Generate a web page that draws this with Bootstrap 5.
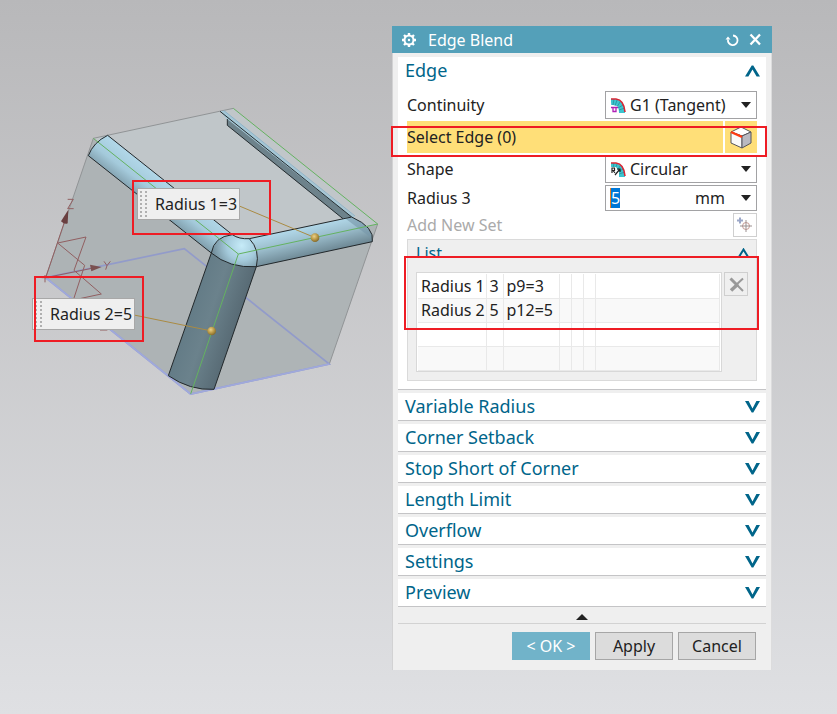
<!DOCTYPE html>
<html lang="en">
<head>
<meta charset="utf-8">
<meta name="viewport" content="width=device-width, initial-scale=1">
<title>Edge Blend</title>
<link rel="stylesheet" href="https://cdn.jsdelivr.net/npm/bootstrap@5.3.0/dist/css/bootstrap.min.css">
<style>
  body { font-family: "Noto Sans", "Open Sans", sans-serif; font-size: 16px; line-height: 20px; color: #222; background: linear-gradient(#b8b8ba, #dfe0e3); }
  svg { display: block; flex: none; }
  .scene { flex: 1 1 0; min-width: 392px; }
  .dialog-wrap { flex: 0 1 380px; margin: 26px 65px 44px 0; }
  .dlg { background: #efefef; border-left: 1px solid #d2d2d3; border-right: 1px solid #dcdcdd; padding-bottom: 10px; }
  .dlg-title { background: #54a0b9; color: #fff; height: 27px; margin: 0 -1px; padding: 0 10px; }
  .dlg button, .dlg select, .dlg input { font: inherit; color: inherit; }
  .plain { border: 0; background: transparent; padding: 0; }
  .sections { padding: 4px 5px 0; }
  .panel { background: #fff; border-bottom: 1px solid #c4c4c6; margin-bottom: 3px; }
  .dlg .panel-head { width: 100%; height: 27px; padding: 0 6px 0 7px; font-size: 18px; line-height: 27px; }
  .dlg .panel-head, .dlg .list-head { color: #00658a; }
  .panel-body { padding: 7px 9px 8px; }
  .line { margin-bottom: 2px; }
  .field { width: 152px; height: 28px; border: 1px solid #a2a2a4; background: #fff; padding: 0 5px; }
  .field.short { height: 26px; padding: 0 5px 0 4px; }
  .field select { appearance: none; border: 0; background: transparent; flex: 1 1 0; min-width: 0; padding: 0 0 0 4px; outline: 0; }
  .field input { border: 0; background: #0078d7; width: 10px; height: 20px; padding: 0; outline: 0; border-left: 1px solid #f08020; }
  .dlg .field input { color: #fff; }
  .caret { width: 10px; height: 6px; background: #222; clip-path: polygon(0 0, 100% 0, 50% 100%); pointer-events: none; flex: none; }
  .active-row { height: 32px; background: #ffdf78; }
  .cube-btn { width: 34px; height: 32px; background: #ffdf78; border-left: 2px solid #fff !important; }
  .tool-btn { width: 24px; height: 24px; border: 1px solid #cfcfcf; padding: 0; background: transparent; }
  .muted { color: #aaa; }
  .list-box { background: #efefef; border: 1px solid #dadada; padding: 0 6px 8px 8px; }
  .list-head { width: 100%; height: 17px; overflow: hidden; align-items: flex-start !important; }
  .list-head span { line-height: 26px; }
  .list-body { padding: 15px 2px 0 0; gap: 2px; }
  .list-frame { flex: 1 1 0; min-width: 0; height: 100px; border: 1px solid #d8d8d8; background: #fff; padding: 1px; }
  .sets { width: 100%; table-layout: fixed; border-collapse: collapse; }
  .sets td { height: 24px; padding: 0 0 0 3px; line-height: 20px; white-space: nowrap; border-right: 1px solid #e9e9e9; border-bottom: 1px solid #e9e9e9; }
  .sets tr:nth-child(even) { background: #f9f9f9; }
  .c-name { width: 68px; } .c-value { width: 17px; } .c-expr { width: 56px; } .c-slim { width: 12px; }
  .callout { border: 2px solid #ee1c24; pointer-events: none; }
  .on-row { left: -16px; right: -10px; top: 5px; height: 31px; }
  .on-list { left: -4px; right: -3px; top: 16px; height: 74px; }
  .foot { margin: 0 5px; border-bottom: 1px solid #d2d2d2; height: 17px; padding-top: 7px; }
  .actions { padding: 8px 15px 0 0; gap: 5px; }
  .dlg .act { width: 78px; height: 28px; padding: 0; border: 1px solid #a6a6a6; border-radius: 0; background: #dcdcdc; }
  .dlg .act.main { background: #71b3c9; border-color: #71b3c9; color: #fff; }
  .tag { height: 32px; width: 103px; border: 1px solid #a8a8a8; background: #efefef; padding-left: 2px; gap: 8px; white-space: nowrap; }
  .tag-one { left: 137px; top: 188px; }
  .tag-two { left: 32px; top: 298px; }
  .mark-one { left: 132px; top: 180px; width: 139px; height: 55px; }
  .mark-two { left: 34px; top: 276px; width: 110px; height: 66px; }
</style>
</head>
<body>
<svg width="0" height="0" class="position-absolute" aria-hidden="true">
  <defs>
    <symbol id="down" viewBox="0 0 15 12"><path d="M0 0H3.600L7.500 7.600 11.400 0H15L8.300 11.500H6.700Z" fill="#00658a"/></symbol>
    <symbol id="up" viewBox="0 0 15 12"><path d="M0 11.500H3.400L7.500 4.500 11.600 11.500H15L8.300 .5H6.700Z" fill="#00658a"/></symbol>
    <symbol id="grip" viewBox="0 0 7 28"><path d="M1 1V28M6 1V28" stroke="#b0b0b0" stroke-width="2" stroke-dasharray="2 2"/></symbol>
  </defs>
</svg>
<main class="d-flex align-items-start">
  <section class="scene position-relative" aria-label="Model view">
    <svg width="392" height="700" viewBox="-90 -285 1176 2100" role="img" aria-label="Block with blended edges">
      <defs>
        <linearGradient id="gLeft" gradientUnits="userSpaceOnUse" x1="390" y1="250" x2="325" y2="335"><stop offset="0" stop-color="#b0d6e7"/><stop offset=".4" stop-color="#a4cadb"/><stop offset="1" stop-color="#6d8793"/></linearGradient>
        <linearGradient id="gRight" gradientUnits="userSpaceOnUse" x1="840" y1="395" x2="860" y2="480"><stop offset="0" stop-color="#b0d6e7"/><stop offset=".4" stop-color="#9bbdcc"/><stop offset="1" stop-color="#6b8591"/></linearGradient>
        <linearGradient id="gFront" gradientUnits="userSpaceOnUse" x1="480" y1="660" x2="615" y2="705"><stop offset="0" stop-color="#647c87"/><stop offset=".4" stop-color="#6b828c"/><stop offset="1" stop-color="#586b75"/></linearGradient>
        <radialGradient id="gCorner" gradientUnits="userSpaceOnUse" cx="635" cy="452" r="90"><stop offset="0" stop-color="#c6ebf8"/><stop offset=".5" stop-color="#a4cadb"/><stop offset="1" stop-color="#708b98"/></radialGradient>
        <radialGradient id="gBall" cx=".4" cy=".35" r=".7"><stop offset="0" stop-color="#ead28b"/><stop offset=".5" stop-color="#bc9b48"/><stop offset="1" stop-color="#7b632a"/></radialGradient>
      </defs>
      <path d="M190 130L610 40 1043 387 625 477Z" fill="#c0c6c9"/>
      <path d="M190 130L625 477 482 897 47 548Z" fill="#adb3b5"/>
      <path d="M625 477L1043 387 898 807 482 897Z" fill="#aeb4b6"/>
      <path d="M47 548L190 130 610 40M1043 387L898 807" fill="none" stroke="#919496" stroke-width="3"/>
      <path d="M47 548L463 461 898 807 482 897Z" fill="none" stroke="#929bca" stroke-width="5"/>
      <path d="M47 548L482 897 898 807" fill="none" stroke="#a0a9dc" stroke-width="5"/>
      <path d="M570 49L582 47 975 366 937 370 592 91V74Z" fill="#a4c7d6"/>
      <path d="M594 74L965 366 937 370 592 91Z" fill="#6d828b"/>
      <path d="M570 49L965 366M592 72V91L940 372" fill="none" stroke="#252b2e" stroke-width="3"/>
      <path d="M582 47L975 363" stroke="#8db4ca" stroke-width="3"/>
      <path d="M175 182C190 148 212 127 233 121L607 419Q563 423 544 474Z" fill="url(#gLeft)"/>
      <path d="M658 431L965 366Q1035 397 1027 440L679 515Q693 460 658 431Z" fill="url(#gRight)"/>
      <path d="M544 474L679 515 552 883Q480 887 415 842Z" fill="url(#gFront)"/>
      <path d="M544 474Q553 430 607 419 627 433 658 431 691 465 679 515 598 520 544 474Z" fill="url(#gCorner)"/>
      <path d="M945 370L1025 430Q1022 393 965 366Z" fill="#7796a8" opacity=".6"/>
      <g fill="none" stroke="#22282b" stroke-width="3">
        <path d="M233 121L607 419Q627 433 658 431L965 366Q1035 397 1027 440L679 515Q598 520 544 474L175 182Q190 142 233 121Z"/>
        <path d="M607 419Q552 425 544 474L415 842Q480 887 552 883L679 515Q691 465 658 431"/>
      </g>
      <path d="M190 130L625 477 1043 387 610 40M625 477L482 897" fill="none" stroke="#64b260" stroke-width="3"/>
      <g fill="none" stroke="#915f61" stroke-width="3">
        <path d="M47 548L107 370M83 444L168 426 132 526 214 597 130 615 164 511 83 444M47 548L190 519M35 548H58M45 540V562"/>
        <path d="M113 313H130L113 341H131M222 499L231 512 241 499M231 512L227 524M210 705H232"/>
      </g>
      <path d="M115 344L93 379Q105 390 113 385Z" fill="#693f40"/>
      <path d="M215 516L180 509 184 529Z" fill="#7a5050"/>
      <path d="M628 333L855 428M312 660L545 708" stroke="#aa8b43" stroke-width="3"/>
      <circle cx="855" cy="428" r="13" fill="url(#gBall)"/><circle cx="545" cy="708" r="13" fill="url(#gBall)"/>
    </svg>
    <div class="tag tag-one position-absolute d-flex align-items-center"><svg width="7" height="28"><use href="#grip"/></svg><span>Radius 1=3</span></div>
    <div class="tag tag-two position-absolute d-flex align-items-center"><svg width="7" height="28"><use href="#grip"/></svg><span>Radius 2=5</span></div>
    <div class="callout mark-one position-absolute"></div>
    <div class="callout mark-two position-absolute"></div>
  </section>

  <div class="dialog-wrap">
  <form class="dlg" onsubmit="return false">
    <header class="dlg-title d-flex align-items-center">
      <svg width="14" height="14" viewBox="0 0 14 14" fill="none" stroke="#fff"><circle cx="7" cy="7" r="4.500" stroke-width="2"/><circle cx="7" cy="7" r="1.200" fill="#fff" stroke="none"/><path d="M7 0V2M7 12V14M0 7H2M12 7H14M2 2L3.500 3.500M10.500 10.500L12 12M12 2L10.500 3.500M3.500 10.500L2 12" stroke-width="2.400"/></svg>
      <span class="ms-2 ps-1 me-auto">Edge Blend</span>
      <button type="button" class="plain me-2" aria-label="Reset"><svg width="16" height="14" viewBox="0 0 16 14" fill="none" stroke="#fff" stroke-width="1.800"><path d="M8 2.500A4.800 4.800 0 1 1 3 6.500"/><path d="M3 3.500L.5 6.500H5.500Z" fill="#fff" stroke="none"/></svg></button>
      <button type="button" class="plain" aria-label="Close"><svg width="13" height="13" viewBox="0 0 13 13" stroke="#fff" stroke-width="2.300"><path d="M1.500 1.500L11 11.500M11 1.500L1.500 11.500"/></svg></button>
    </header>

    <div class="sections">
      <section class="panel">
        <button type="button" class="plain panel-head d-flex align-items-center justify-content-between"><span>Edge</span><svg width="15" height="12"><use href="#up"/></svg></button>
        <div class="panel-body">
          <div class="line d-flex align-items-center justify-content-between">
            <label for="continuity">Continuity</label>
            <div class="field d-flex align-items-center">
              <svg width="15" height="15" viewBox="0 0 15 15" fill="none"><path d="M0 4Q11 3 11 15" stroke="#3cc4cf" stroke-width="6"/><path d="M3 1L2 7M6 2L4 8M9 4L6 9M12 7L7 10M14 10L8 12" stroke="#227d89" stroke-width=".6"/><path d="M0 1H5Q13 2 14 14" stroke="#d82433" stroke-width="1.600"/><path d="M0 8.500H7V15H0Z" fill="#fff"/><path d="M0 9.500H7M2 10V13.500H5V10" stroke="#b020b5" stroke-width="1.300"/></svg>
              <select id="continuity"><option>G1 (Tangent)</option></select><span class="caret"></span>
            </div>
          </div>
          <div class="line active-row position-relative d-flex align-items-center justify-content-between">
            <span id="pick">Select Edge (0)</span>
            <button type="button" class="plain cube-btn d-flex align-items-center justify-content-center" aria-labelledby="pick"><svg width="22" height="23" viewBox="0 0 22 23" stroke="#55555c" stroke-linejoin="round"><path d="M11 1L21 6 12 10 1 6Z" fill="#fff"/><path d="M1 6L12 10V22L1 17Z" fill="#fafafa"/><path d="M12 10L21 6V17L12 22Z" fill="#b9b9c1"/><path d="M1 6L12 11" stroke="#ff3b12" stroke-width="2.400"/></svg></button>
            <div class="callout on-row position-absolute"></div>
          </div>
          <div class="line d-flex align-items-center justify-content-between">
            <label for="shape">Shape</label>
            <div class="field d-flex align-items-center">
              <svg width="15" height="15" viewBox="0 0 15 15" fill="none"><path d="M0 4Q11 3 11 15" stroke="#3cc4cf" stroke-width="6"/><path d="M3 1L2 7M6 2L4 8M9 4L6 9M12 7L7 10M14 10L8 12" stroke="#227d89" stroke-width=".6"/><path d="M0 1H5Q13 2 14 14" stroke="#d82433" stroke-width="1.600"/><path d="M0 5H5L8 10V15H0Z" fill="#fff"/><path d="M1 11V6H3.500V8.500H1M2 8.500L4 11M4 13L9 7M6 7H9V10" stroke="#222" stroke-width="1.200"/></svg>
              <select id="shape"><option>Circular</option></select><span class="caret"></span>
            </div>
          </div>
          <div class="line d-flex align-items-center justify-content-between">
            <label for="radius">Radius 3</label>
            <div class="field short d-flex align-items-center">
              <input id="radius" type="text" value="5"><select class="text-end pe-3" aria-label="Unit"><option>mm</option></select><span class="caret"></span>
            </div>
          </div>
          <div class="line d-flex align-items-center justify-content-between muted">
            <span id="addset">Add New Set</span>
            <button type="button" class="tool-btn d-flex align-items-center justify-content-center" aria-labelledby="addset"><svg width="16" height="16" viewBox="0 0 16 16" fill="none"><path d="M0 3.500H6M3 .5V6.500" stroke="#9ba7c8" stroke-width="2"/><circle cx="9" cy="9" r="3.500" stroke="#c99b94"/><path d="M9 3V15M3 9H15" stroke="#9b8f8f"/></svg></button>
          </div>
          <div class="list-box position-relative">
            <button type="button" class="plain list-head d-flex justify-content-between"><span>List</span><svg width="13" height="11" class="mt-2" viewBox="0 0 13 11" fill="none"><path d="M1 10.500L6.500 1.500 12 10.500" stroke="#00658a" stroke-width="2"/></svg></button>
            <div class="list-body d-flex align-items-start">
              <div class="list-frame">
                <table class="sets" aria-label="List">
                  <colgroup><col class="c-name"><col class="c-value"><col class="c-expr"><col class="c-slim"><col class="c-slim"><col class="c-slim"><col></colgroup>
                  <tbody>
                    <tr><td>Radius 1</td><td>3</td><td>p9=3</td><td></td><td></td><td></td><td></td></tr>
                    <tr><td>Radius 2</td><td>5</td><td>p12=5</td><td></td><td></td><td></td><td></td></tr>
                    <tr><td></td><td></td><td></td><td></td><td></td><td></td><td></td></tr>
                    <tr><td></td><td></td><td></td><td></td><td></td><td></td><td></td></tr>
                  </tbody>
                </table>
              </div>
              <button type="button" class="tool-btn d-flex align-items-center justify-content-center" aria-label="Remove"><svg width="15" height="15" viewBox="0 0 15 15" fill="none" stroke="#999"><path d="M1.500 1.500L8 8" stroke-width="3"/><path d="M7 7L14 14" stroke-width="2"/><path d="M14 1.500L7 8" stroke-width="2"/><path d="M9 7L2 13.500" stroke-width="3.500"/></svg></button>
            </div>
            <div class="callout on-list position-absolute"></div>
          </div>
        </div>
      </section>
      <section class="panel"><button type="button" class="plain panel-head d-flex align-items-center justify-content-between"><span>Variable Radius</span><svg width="15" height="12"><use href="#down"/></svg></button></section>
      <section class="panel"><button type="button" class="plain panel-head d-flex align-items-center justify-content-between"><span>Corner Setback</span><svg width="15" height="12"><use href="#down"/></svg></button></section>
      <section class="panel"><button type="button" class="plain panel-head d-flex align-items-center justify-content-between"><span>Stop Short of Corner</span><svg width="15" height="12"><use href="#down"/></svg></button></section>
      <section class="panel"><button type="button" class="plain panel-head d-flex align-items-center justify-content-between"><span>Length Limit</span><svg width="15" height="12"><use href="#down"/></svg></button></section>
      <section class="panel"><button type="button" class="plain panel-head d-flex align-items-center justify-content-between"><span>Overflow</span><svg width="15" height="12"><use href="#down"/></svg></button></section>
      <section class="panel"><button type="button" class="plain panel-head d-flex align-items-center justify-content-between"><span>Settings</span><svg width="15" height="12"><use href="#down"/></svg></button></section>
      <section class="panel mb-0"><button type="button" class="plain panel-head d-flex align-items-center justify-content-between"><span>Preview</span><svg width="15" height="12"><use href="#down"/></svg></button></section>
    </div>
    <div class="foot d-flex justify-content-center"><button type="button" class="plain d-flex" aria-label="Show less"><svg width="12" height="6" viewBox="0 0 12 6"><path d="M0 6L6 0 12 6Z" fill="#222"/></svg></button></div>
    <div class="actions d-flex justify-content-end">
      <button type="submit" class="btn act main">&lt; OK &gt;</button>
      <button type="button" class="btn act">Apply</button>
      <button type="button" class="btn act">Cancel</button>
    </div>
  </form>
  </div>
</main>
<script src="https://cdn.jsdelivr.net/npm/bootstrap@5.3.0/dist/js/bootstrap.bundle.min.js"></script>
</body>
</html>
